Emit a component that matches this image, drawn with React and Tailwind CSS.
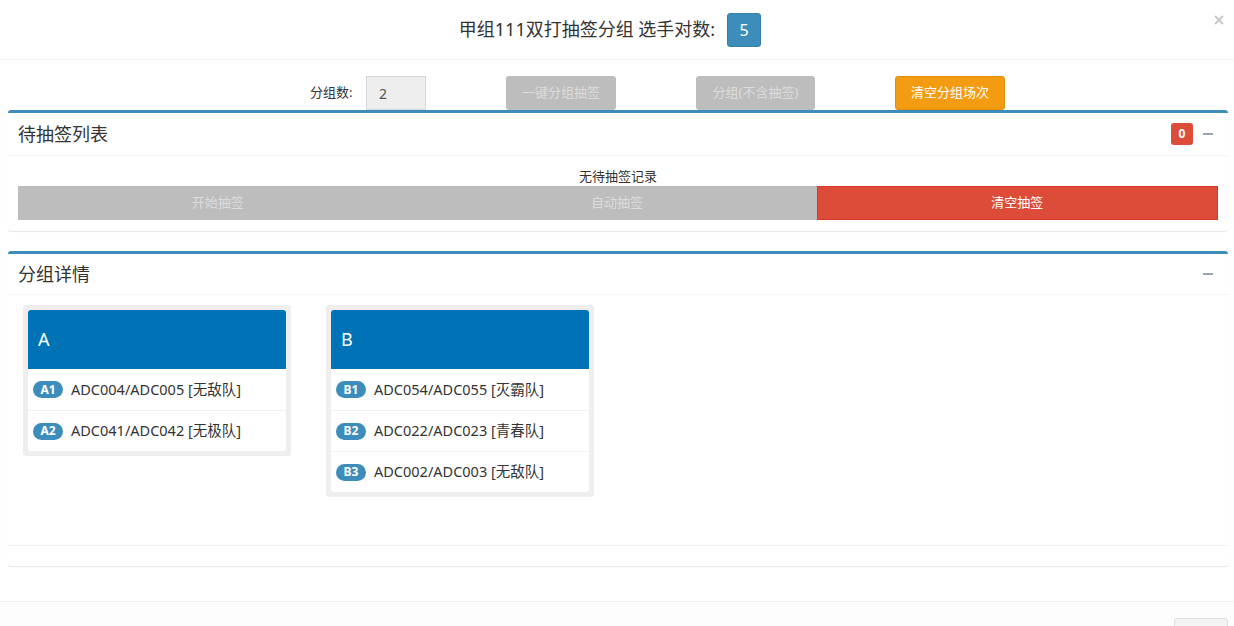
import React from 'react';

const font = { fontFamily: '"Noto Sans", "Noto Sans CJK SC", sans-serif' };

const groups = [
    {
        name: 'A',
        rows: [
            { tag: 'A1', text: 'ADC004/ADC005 [无敌队]' },
            { tag: 'A2', text: 'ADC041/ADC042 [无极队]' },
        ],
    },
    {
        name: 'B',
        rows: [
            { tag: 'B1', text: 'ADC054/ADC055 [灭霸队]' },
            { tag: 'B2', text: 'ADC022/ADC023 [青春队]' },
            { tag: 'B3', text: 'ADC002/ADC003 [无敌队]' },
        ],
    },
];

const GroupCard = ({ name, rows }) => (
    <div className="w-[268px] bg-[#eeeeee] p-[5px] rounded-[3px]">
        <div className="bg-white rounded-[3px] overflow-hidden">
            <div className="h-[59px] bg-[#0073b7] text-white text-[18px] flex items-center px-[10px]">{name}</div>
            {rows.map((r, i) => (
                <div key={r.tag}
                    className={'h-[41px] flex items-center px-[5px] text-[14.5px] text-[#333] ' + (i > 0 ? 'border-t border-[#f0f0f0]' : '')}
                >
                    <span className="bg-[#3c8dbc] text-white text-[12px] font-bold rounded-full w-[30px] h-[17px] flex items-center justify-center leading-none mr-[8px]">
                        {r.tag}
                    </span>
                    {r.text}
                </div>
            ))}
        </div>
    </div>
);

const App = () => {
    return (
        <div className="w-[1234px] h-[626px] bg-white overflow-hidden text-[#333]" style={font}>
            <div className="h-[60px] border-b border-[#f0f0f0] relative flex items-center justify-center pr-[14px]">
                <span className="text-[18px] text-[#333] mr-[12px]">甲组111双打抽签分组 选手对数:</span>
                <span className="bg-[#3c8dbc] text-white text-[16px] w-[34px] h-[34px] rounded-[3px] flex items-center justify-center border border-[#367fa9]">5</span>
                <svg className="absolute right-[10px] top-[15px]" width="10" height="10" viewBox="0 0 10 10">
                    <path d="M1 1 L9 9 M9 1 L1 9" stroke="#c6c6c6" strokeWidth="1.8" />
                </svg>
            </div>

            <div className="px-[8px] pr-[6px] pt-[16px]">
                <div className="flex items-center pl-[302px] h-[34px]">
                    <span className="text-[13px] w-[48px] mr-[8px] whitespace-nowrap">分组数:</span>
                    <div className="w-[60px] h-[34px] bg-[#eeeeee] border border-[#d2d6de] flex items-center px-[12px] text-[14px] text-[#555]">2</div>
                    <button className="ml-[80px] w-[110px] h-[34px] bg-[#bdbdbd] text-[#dcdcdc] text-[13px] rounded-[3px]">一键分组抽签</button>
                    <button className="ml-[80px] w-[119px] h-[34px] bg-[#bdbdbd] text-[#dcdcdc] text-[13px] rounded-[3px]">分组(不含抽签)</button>
                    <button className="ml-[80px] w-[110px] h-[34px] bg-[#f39c12] border border-[#e08e0b] text-white text-[13px] rounded-[3px]">清空分组场次</button>
                </div>

                <div className="border-t-[3px] border-[#3c8dbc] rounded-[3px] bg-white shadow-[0_1px_1px_rgba(0,0,0,0.1)]">
                    <div className="h-[43px] flex items-center justify-between px-[10px] border-b border-[#f4f4f4]">
                        <span className="text-[18px]">待抽签列表</span>
                        <div className="flex items-center">
                            <span className="bg-[#dd4b39] text-white text-[12px] font-bold rounded-[3px] w-[22px] h-[22px] flex items-center justify-center">0</span>
                            <span className="ml-[10px] mr-[5px] w-[10px] h-[2px] bg-[#97a0b3]"></span>
                        </div>
                    </div>
                    <div className="px-[10px] pt-[10px] pb-[11px]">
                        <div className="text-center text-[13px] leading-[20px] h-[20px]">无待抽签记录</div>
                        <div className="flex h-[34px]">
                            <button className="flex-1 bg-[#bdbdbd] text-[#dcdcdc] text-[13px]">开始抽签</button>
                            <button className="flex-1 bg-[#bdbdbd] text-[#dcdcdc] text-[13px]">自动抽签</button>
                            <button className="flex-1 bg-[#dd4b39] border border-[#d73925] text-white text-[13px]">清空抽签</button>
                        </div>
                    </div>
                </div>

                <div className="mt-[20px] border-t-[3px] border-[#3c8dbc] rounded-[3px] bg-white shadow-[0_1px_1px_rgba(0,0,0,0.1)]">
                    <div className="h-[41px] flex items-center justify-between px-[10px] border-b border-[#f4f4f4]">
                        <span className="text-[18px]">分组详情</span>
                        <span className="mr-[5px] w-[10px] h-[2px] bg-[#97a0b3]"></span>
                    </div>
                    <div className="h-[251px] flex items-start gap-[35px] pl-[15px] pt-[10px] border-b border-[#f0f0f0]">
                        {groups.map((g) => (
                            <GroupCard key={g.name} {...g} />
                        ))}
                    </div>
                    <div className="h-[20px]"></div>
                </div>
            </div>

            <div className="mt-[35px] border-t border-[#f0f0f0] bg-[#fdfdfd] h-[40px] flex justify-end pr-[6px] pt-[16px]">
                <div className="w-[54px] h-[34px] bg-[#f4f4f4] border border-[#dddddd] rounded-[3px]"></div>
            </div>
        </div>
    );
};

export default App;
